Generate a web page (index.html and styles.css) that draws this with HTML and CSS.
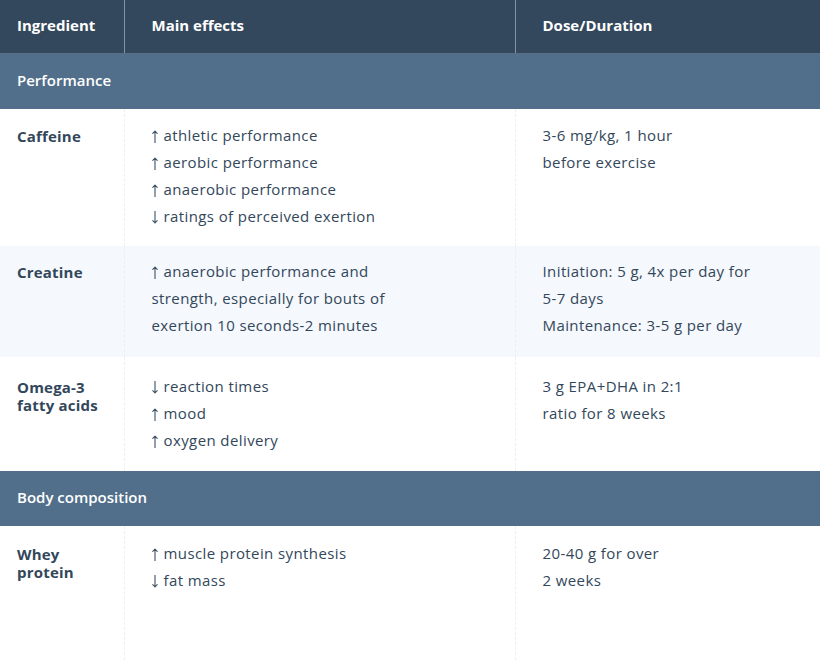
FILE: index.html
```html
<!DOCTYPE html>
<html>
<head>
<meta charset="utf-8">
<link rel="stylesheet" href="styles.css">
</head>
<body>
<table class="supp">
  <colgroup>
    <col class="c1"><col class="c2"><col class="c3">
  </colgroup>
  <thead>
    <tr class="head">
      <th>Ingredient</th>
      <th>Main effects</th>
      <th>Dose/Duration</th>
    </tr>
  </thead>
  <tbody>
    <tr class="section"><td colspan="3">Performance</td></tr>
    <tr class="row">
      <td class="name">Caffeine</td>
      <td class="fx">
        <p><svg class="arr" viewBox="0 0 6 13"><path d="M3 1V13M0.8 3.4L3 1L5.2 3.4"/></svg>athletic performance</p>
        <p><svg class="arr" viewBox="0 0 6 13"><path d="M3 1V13M0.8 3.4L3 1L5.2 3.4"/></svg>aerobic performance</p>
        <p><svg class="arr" viewBox="0 0 6 13"><path d="M3 1V13M0.8 3.4L3 1L5.2 3.4"/></svg>anaerobic performance</p>
        <p><svg class="arr" viewBox="0 0 6 13"><path d="M3 0V12M0.8 9.6L3 12L5.2 9.6"/></svg>ratings of perceived exertion</p>
      </td>
      <td class="dose"><p>3-6 mg/kg, 1 hour</p><p>before exercise</p></td>
    </tr>
    <tr class="row alt">
      <td class="name">Creatine</td>
      <td class="fx"><p><svg class="arr" viewBox="0 0 6 13"><path d="M3 1V13M0.8 3.4L3 1L5.2 3.4"/></svg>anaerobic performance and strength, especially for bouts of exertion 10 seconds-2 minutes</p></td>
      <td class="dose"><p>Initiation: 5 g, 4x per day for 5-7 days</p><p>Maintenance: 3-5 g per day</p></td>
    </tr>
    <tr class="row tall">
      <td class="name">Omega-3 fatty acids</td>
      <td class="fx">
        <p><svg class="arr" viewBox="0 0 6 13"><path d="M3 0V12M0.8 9.6L3 12L5.2 9.6"/></svg>reaction times</p>
        <p><svg class="arr" viewBox="0 0 6 13"><path d="M3 1V13M0.8 3.4L3 1L5.2 3.4"/></svg>mood</p>
        <p><svg class="arr" viewBox="0 0 6 13"><path d="M3 1V13M0.8 3.4L3 1L5.2 3.4"/></svg>oxygen delivery</p>
      </td>
      <td class="dose"><p>3 g EPA+DHA in 2:1</p><p>ratio for 8 weeks</p></td>
    </tr>
    <tr class="section"><td colspan="3">Body composition</td></tr>
    <tr class="row last">
      <td class="name">Whey protein</td>
      <td class="fx">
        <p><svg class="arr" viewBox="0 0 6 13"><path d="M3 1V13M0.8 3.4L3 1L5.2 3.4"/></svg>muscle protein synthesis</p>
        <p><svg class="arr" viewBox="0 0 6 13"><path d="M3 0V12M0.8 9.6L3 12L5.2 9.6"/></svg>fat mass</p>
      </td>
      <td class="dose"><p>20-40 g for over</p><p>2 weeks</p></td>
    </tr>
  </tbody>
</table>
</body>
</html>
```
FILE: styles.css
```css
html, body {
  margin: 0;
  padding: 0;
  background: #ffffff;
}
body {
  font-family: "Open Sans", Lato, sans-serif;
  color: #33475b;
  overflow: hidden;
}
.supp {
  width: 820px;
  border-collapse: collapse;
  table-layout: fixed;
}
.c1 { width: 124px; }
.c2 { width: 391px; }
.c3 { width: 305px; }

.head th {
  background: #34485d;
  color: #ffffff;
  font-weight: 700;
  font-size: 15px;
  text-align: left;
  height: 49px;
  padding: 0 0 4px 27px;
  border-left: 1px solid #8393a4;
  border-bottom: 1px solid #5a6f84;
  vertical-align: middle;
}
.head th:first-child {
  border-left: none;
  padding-left: 17px;
}
.section td {
  background: #516f8a;
  color: #ffffff;
  font-weight: 600;
  font-size: 15px;
  height: 52px;
  padding: 0 0 3px 17px;
  vertical-align: middle;
}
.row td {
  vertical-align: top;
  padding: 13px 16px 16px 27px;
  font-size: 15px;
  line-height: 27px;
  letter-spacing: 0.4px;
  border-left: 1px dashed #eceff3;
}
.row td.name {
  border-left: none;
  padding-left: 17px;
  font-weight: 700;
  letter-spacing: 0.2px;
  line-height: 18px;
  padding-top: 18px;
}
.row p {
  margin: 0;
}
.fx p { max-width: 240px; }
.dose p { max-width: 215px; }
.arr {
  width: 6px;
  height: 13px;
  margin-right: 6px;
  vertical-align: -2px;
  fill: none;
  stroke: #3d5166;
  stroke-width: 1.1;
  stroke-linecap: round;
  stroke-linejoin: round;
}
.alt td {
  padding-top: 12px;
  padding-bottom: 18px;
  background: #f5f8fc;
}
.alt td.name {
  padding-top: 17px;
}
.tall td {
  padding-top: 16px;
  padding-bottom: 17px;
}
.tall td.name {
  padding-top: 21px;
}
.last td {
  height: 104px;
  padding-top: 14px;
}
.last td.name {
  padding-top: 19px;
}
```
